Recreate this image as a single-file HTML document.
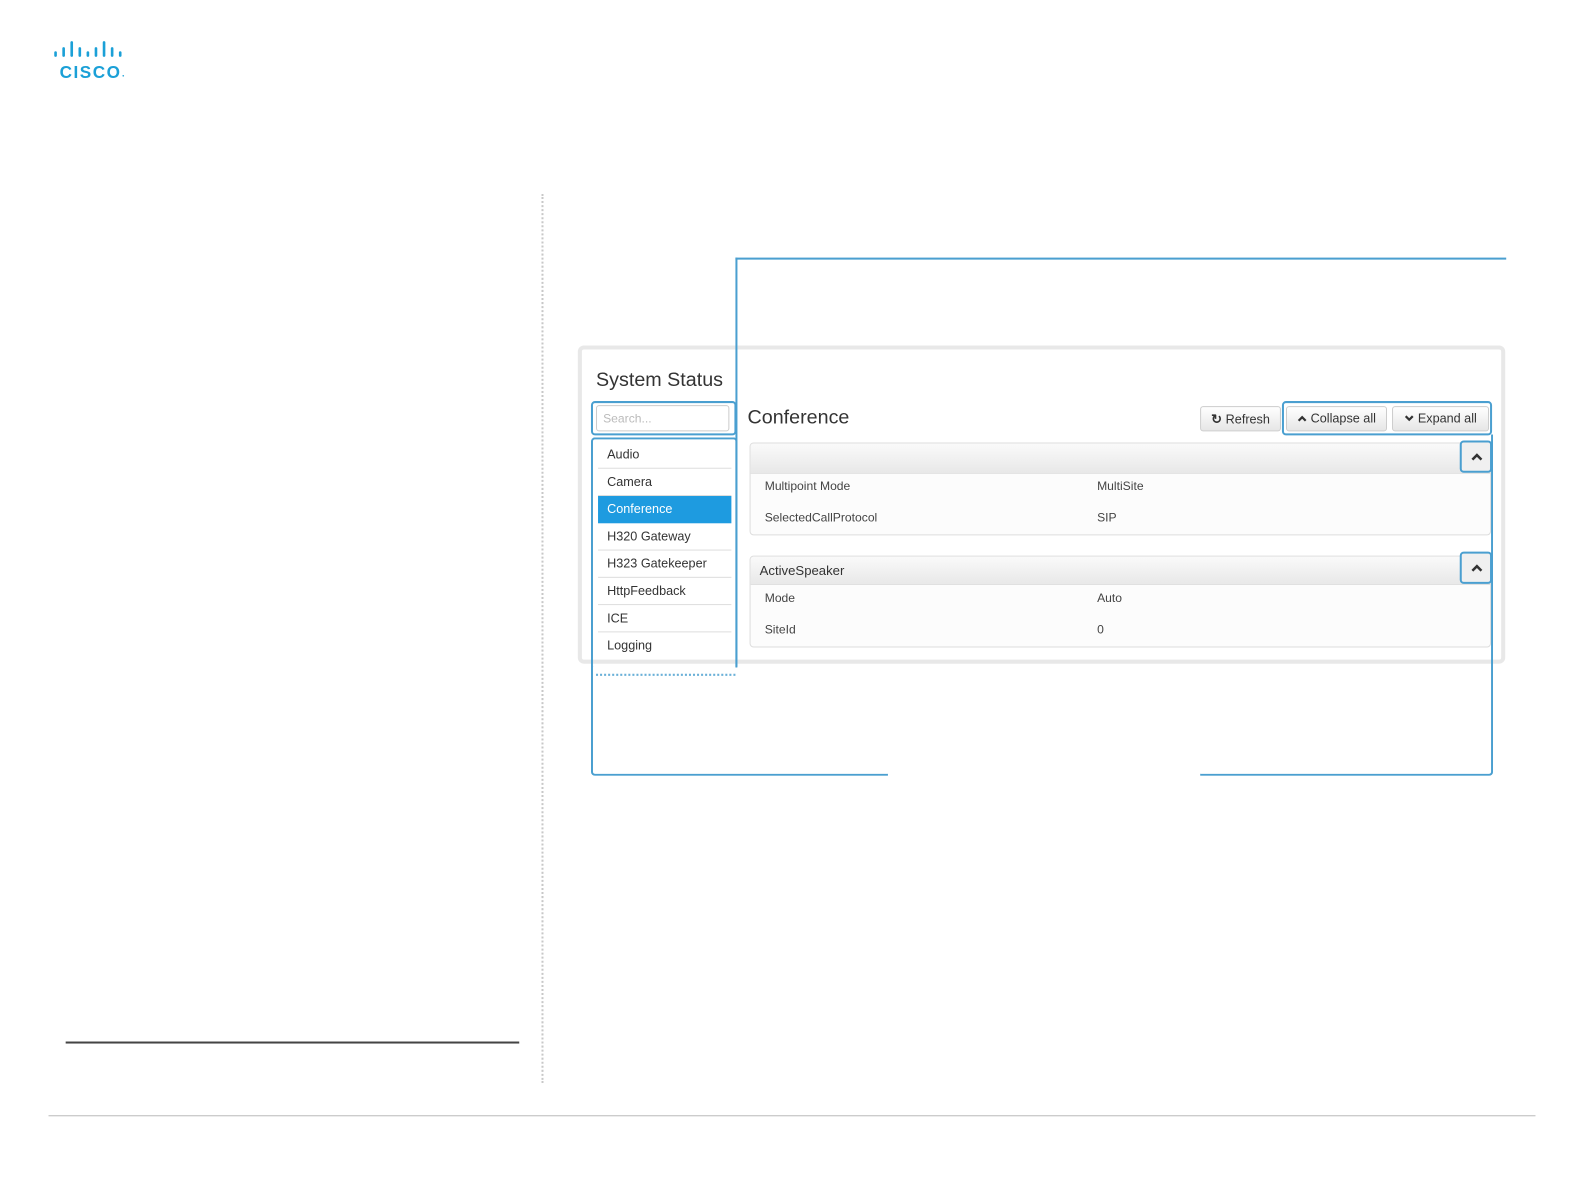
<!DOCTYPE html>
<html><head><meta charset="utf-8"><style>
html,body{margin:0;padding:0;background:#fff;width:1584px;height:1191px;overflow:hidden;font-family:"Liberation Sans",Arial,sans-serif}
#w{position:absolute;left:0;top:0;width:1568px;height:1179px;transform:scale(1.0102);transform-origin:0 0}
.a{position:absolute;box-sizing:border-box}
.b{border-color:#4a9fd0;border-style:solid;border-width:0}
.nav{left:592px;width:132px;height:27px;font-size:12.5px;color:#333;padding-left:9px;line-height:26px;border-bottom:1px solid #ddd}
.row{font-size:12px;color:#444}
.btn{top:402px;height:25px;border:1px solid #ccc;border-radius:3px;background:linear-gradient(#fff,#e6e6e6);font-size:12.5px;color:#333;line-height:23px;text-align:center}
.ph{background:linear-gradient(#fafafa,#e8e8e8);border-bottom:1px solid #ddd}
.chev{background:#f0f0f0}
</style></head><body><div id="w">
<svg class="a" style="left:52px;top:40px" width="76" height="42" viewBox="0 0 76 42">
<g stroke="#1ba0d7" stroke-width="2.6" stroke-linecap="round">
<line x1="3" y1="12" x2="3" y2="15"/><line x1="11" y1="8" x2="11" y2="15"/><line x1="19" y1="2" x2="19" y2="15"/><line x1="27" y1="8" x2="27" y2="15"/><line x1="35" y1="12" x2="35" y2="15"/><line x1="43" y1="8" x2="43" y2="15"/><line x1="51" y1="2" x2="51" y2="15"/><line x1="59" y1="8" x2="59" y2="15"/><line x1="67" y1="12" x2="67" y2="15"/></g>
<text x="7" y="37" font-family="Liberation Sans" font-weight="bold" font-size="17" fill="#1ba0d7" letter-spacing="1.5">CISCO</text>
<circle cx="70" cy="35" r="0.8" fill="#1ba0d7"/></svg>
<div class="a" style="left:536px;top:192px;height:880px;border-left:2px dotted #c8c8c8"></div>
<div class="a" style="left:65px;top:1031px;width:449px;height:2px;background:#444"></div>
<div class="a" style="left:48px;top:1104px;width:1472px;height:1px;background:#bbb"></div>
<div class="a" style="left:572px;top:342px;width:918px;height:315px;border:4px solid #e8e8e8;border-radius:6px;background:#fff"></div>
<div class="a" style="left:590px;top:365px;font-size:19.5px;color:#333">System Status</div>
<div class="a" style="left:590px;top:401px;width:132px;height:26px;border:1px solid #ccc;border-radius:3px;font-size:12px;color:#bbb;padding:5px 6px">Search...</div>
<div class="a nav" style="top:437px">Audio</div>
<div class="a nav" style="top:464px">Camera</div>
<div class="a nav" style="top:491px;background:#1e9be0;color:#fff;border-bottom:none">Conference</div>
<div class="a nav" style="top:518px">H320 Gateway</div>
<div class="a nav" style="top:545px">H323 Gatekeeper</div>
<div class="a nav" style="top:572px">HttpFeedback</div>
<div class="a nav" style="top:599px">ICE</div>
<div class="a nav" style="top:626px;border-bottom:none">Logging</div>
<div class="a" style="left:740px;top:402px;font-size:19.5px;color:#333">Conference</div>
<div class="a btn" style="left:1188px;width:80px"><b style="font-size:13px">&#8635;</b> Refresh</div>
<div class="a btn" style="left:1273px;width:100px"><svg width="10" height="8" viewBox="0 0 10 8"><path d="M1.5 6.5 L5 3 L8.5 6.5" fill="none" stroke="#333" stroke-width="2.2"/></svg> Collapse all</div>
<div class="a btn" style="left:1378px;width:96px"><svg width="10" height="8" viewBox="0 0 10 8"><path d="M1.5 2 L5 5.5 L8.5 2" fill="none" stroke="#333" stroke-width="2.2"/></svg> Expand all</div>
<div class="a" style="left:742px;top:438px;width:734px;height:92px;border:1px solid #ddd;border-radius:4px;overflow:hidden;background:#fcfcfc">
<div class="ph" style="height:29px"></div></div>
<div class="a row" style="left:757px;top:474px">Multipoint Mode</div>
<div class="a row" style="left:1086px;top:474px">MultiSite</div>
<div class="a row" style="left:757px;top:505px">SelectedCallProtocol</div>
<div class="a row" style="left:1086px;top:505px">SIP</div>
<div class="a" style="left:742px;top:550px;width:734px;height:91px;border:1px solid #ddd;border-radius:4px;overflow:hidden;background:#fcfcfc">
<div class="ph" style="height:28px;font-size:13px;color:#333;padding:6px 9px;box-sizing:border-box">ActiveSpeaker</div></div>
<div class="a row" style="left:757px;top:585px">Mode</div>
<div class="a row" style="left:1086px;top:585px">Auto</div>
<div class="a row" style="left:757px;top:616px">SiteId</div>
<div class="a row" style="left:1086px;top:616px">0</div>
<div class="a" style="left:728px;top:255px;width:763px;height:2px;background:#4a9fd0"></div>
<div class="a" style="left:728px;top:255px;width:2px;height:405px;background:#4a9fd0"></div>
<div class="a b" style="left:585px;top:397px;width:144px;height:34px;border-width:2px;border-radius:4px"></div>
<div class="a b" style="left:585px;top:433px;width:145px;height:228px;border-width:2px 2px 0 2px;border-radius:4px 4px 0 0"></div>
<div class="a b" style="left:585px;top:660px;width:294px;height:108px;border-width:0 0 2px 2px;border-radius:0 0 0 4px"></div>
<div class="a" style="left:590px;top:667px;width:138px;border-top:2px dotted #6ab0d8"></div>
<div class="a b" style="left:1188px;top:430px;width:290px;height:338px;border-width:0 2px 2px 0;border-radius:0 0 4px 0"></div>
<div class="a b" style="left:1269px;top:397px;width:208px;height:34px;border-width:2px;border-radius:4px"></div>
<div class="a b chev" style="left:1445px;top:436px;width:32px;height:32px;border-width:2px;border-radius:4px"><svg style="position:absolute;left:9px;top:10px" width="12" height="9" viewBox="0 0 12 9"><path d="M1.5 7 L6 2.5 L10.5 7" fill="none" stroke="#333" stroke-width="2.5"/></svg></div>
<div class="a b chev" style="left:1445px;top:546px;width:32px;height:32px;border-width:2px;border-radius:4px"><svg style="position:absolute;left:9px;top:10px" width="12" height="9" viewBox="0 0 12 9"><path d="M1.5 7 L6 2.5 L10.5 7" fill="none" stroke="#333" stroke-width="2.5"/></svg></div>
</div></body></html>
